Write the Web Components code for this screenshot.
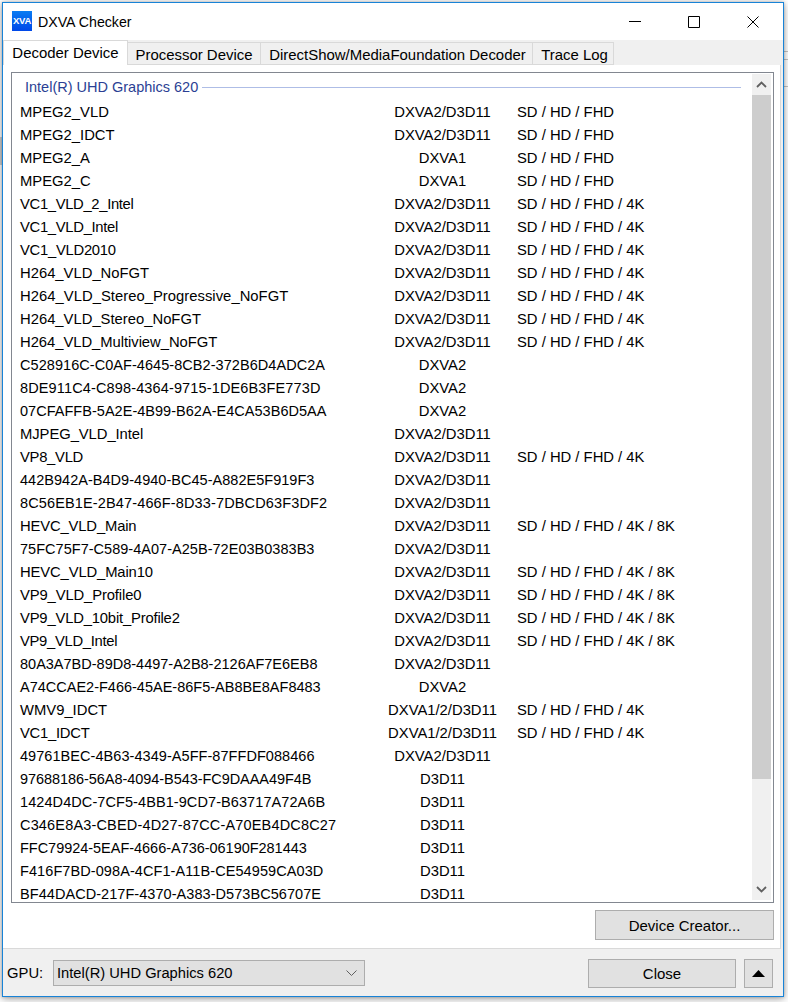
<!DOCTYPE html>
<html><head><meta charset="utf-8"><title>DXVA Checker</title>
<style>
html,body{margin:0;padding:0;background:#fff;height:100%;overflow:hidden}
body{padding:2px 0 0 2px;box-sizing:border-box;font:14.8px "Liberation Sans",Arial,sans-serif;color:#000;
background:
 linear-gradient(#c4c4c4,#c4c4c4) right 0 top 51px/4px 1px no-repeat,
 linear-gradient(#c4c4c4,#c4c4c4) right 0 top 59px/4px 1px no-repeat,
 linear-gradient(#c4c4c4,#c4c4c4) right 0 top 86px/4px 1px no-repeat,
 linear-gradient(#cfcfcf,#cfcfcf) left 0 top 137px/2px 28px no-repeat,
 #fff}
</style></head><body>
<dx-window>
  <dx-titlebar slot="title">DXVA Checker</dx-titlebar>
  <dx-tabs slot="tabs"><dx-tab active w="125">Decoder Device</dx-tab><dx-tab w="133">Processor Device</dx-tab><dx-tab w="272" style="padding-left:2px">DirectShow/MediaFoundation Decoder</dx-tab><dx-tab w="81" style="padding-left:3px">Trace Log</dx-tab></dx-tabs>
  <dx-page slot="page">
    <dx-list heading="Intel(R) UHD Graphics 620"></dx-list>
    <dx-button slot="action" w="179" h="30">Device Creator...</dx-button>
  </dx-page>
  <dx-footer slot="footer">
    <span slot="label">GPU:</span>
    <dx-combo slot="combo">Intel(R) UHD Graphics 620</dx-combo>
    <dx-button slot="close" w="148" h="29">Close</dx-button>
    <dx-button slot="more" w="29" h="29"><svg width="13" height="7" viewBox="0 0 13 7"><path d="M6.5 0 13 7H0z" fill="#000"/></svg></dx-button>
  </dx-footer>
</dx-window>
<script>
function def(name,html,init){customElements.define(name,class extends HTMLElement{constructor(){super();this.attachShadow({mode:'open'}).innerHTML=html}connectedCallback(){init&&init(this)}})}
def('dx-window',`<style>:host{display:flex;flex-direction:column;box-sizing:border-box;width:782px;height:995px;background:#f0f0f0;border:1px solid #1883d7;box-shadow:0 2px 8px rgba(0,0,0,.35),0 0 3px rgba(0,0,0,.2)}</style><slot name="title"></slot><slot name="tabs"></slot><slot name="page"></slot><slot name="footer"></slot>`);
def('dx-titlebar',`<style>:host{display:flex;align-items:center;height:37px;flex:none;background:#fff;padding-left:9px;font-size:14.2px;position:relative}
.logo{width:20px;height:20px;margin-right:6px;margin-top:-1px;background:linear-gradient(#0a7cf2,#0048e8);color:#fff;font:bold 9.5px/20px "Liberation Sans",sans-serif;text-align:center;letter-spacing:-.2px}
.t{margin-top:1px}.c{margin-left:auto;display:flex;margin-right:1px}
.c div{width:59px;height:37px;display:flex;align-items:center;justify-content:center}svg{display:block}</style>
<div class="logo">XVA</div><span class="t"><slot></slot></span>
<div class="c"><div><svg width="12" height="12" viewBox="0 0 12 12"><path d="M0 5.5h12" stroke="#000"/></svg></div><div><svg width="12" height="12" viewBox="0 0 12 12"><path d="M.5.5h11v11H.5z" fill="none" stroke="#000"/></svg></div><div><svg width="12" height="12" viewBox="0 0 12 12"><path d="M.5.5l11 11M11.500.5l-11 11" fill="none" stroke="#000" stroke-width="1"/></svg></div></div>`);
def('dx-tabs',`<style>:host{display:flex;align-items:flex-end;height:25px;flex:none;background:#f0f0f0;position:relative;z-index:1;margin-bottom:-1px}</style><slot></slot>`);
def('dx-tab',`<style>:host{display:flex;align-items:center;justify-content:center;box-sizing:border-box;height:23px;border:1px solid #d9d9d9;border-left:0;background:#f0f0f0;font-size:14.95px;padding-top:1px}
:host([active]){height:25px;background:#fff;border-bottom:0;border-left:1px solid #d9d9d9;padding:0 0 1px}</style><slot></slot>`,e=>{e.style.width=e.getAttribute('w')+'px'});
def('dx-page',`<style>:host{flex:none;display:flex;flex-direction:column;box-sizing:border-box;height:885px;background:#fff;border:1px solid #d9d9d9;border-left:0;margin-right:2px;padding:7px 6px 0 8px}
.a{display:flex;justify-content:flex-end;margin-top:7px}</style><slot></slot><div class="a"><slot name="action"></slot></div>`);
/* name | api | resolutions | width correction in px, spread over the name */
const R=`MPEG2_VLD|DXVA2/D3D11|f
MPEG2_IDCT|DXVA2/D3D11|f
MPEG2_A|DXVA1|f
MPEG2_C|DXVA1|f
VC1_VLD_2_Intel|DXVA2/D3D11|k|-5
VC1_VLD_Intel|DXVA2/D3D11|k|-4
VC1_VLD2010|DXVA2/D3D11|k|-3
H264_VLD_NoFGT|DXVA2/D3D11|k
H264_VLD_Stereo_Progressive_NoFGT|DXVA2/D3D11|k|1
H264_VLD_Stereo_NoFGT|DXVA2/D3D11|k
H264_VLD_Multiview_NoFGT|DXVA2/D3D11|k|-1
C528916C-C0AF-4645-8CB2-372B6D4ADC2A|DXVA2||2
8DE911C4-C898-4364-9715-1DE6B3FE773D|DXVA2||5
07CFAFFB-5A2E-4B99-B62A-E4CA53B6D5AA|DXVA2||1
MJPEG_VLD_Intel|DXVA2/D3D11||-1
VP8_VLD|DXVA2/D3D11|k|-2
442B942A-B4D9-4940-BC45-A882E5F919F3|DXVA2/D3D11||1
8C56EB1E-2B47-466F-8D33-7DBCD63F3DF2|DXVA2/D3D11||5
HEVC_VLD_Main|DXVA2/D3D11|e|-2
75FC75F7-C589-4A07-A25B-72E03B0383B3|DXVA2/D3D11||1
HEVC_VLD_Main10|DXVA2/D3D11|e|-2
VP9_VLD_Profile0|DXVA2/D3D11|e|-2
VP9_VLD_10bit_Profile2|DXVA2/D3D11|e|-4
VP9_VLD_Intel|DXVA2/D3D11|e|-4
80A3A7BD-89D8-4497-A2B8-2126AF7E6EB8|DXVA2/D3D11||0
A74CCAE2-F466-45AE-86F5-AB8BE8AF8483|DXVA2||0
WMV9_IDCT|DXVA1/2/D3D11|k
VC1_IDCT|DXVA1/2/D3D11|k|-2
49761BEC-4B63-4349-A5FF-87FFDF088466|DXVA2/D3D11||2
97688186-56A8-4094-B543-FC9DAAA49F4B|D3D11||-2
1424D4DC-7CF5-4BB1-9CD7-B63717A72A6B|D3D11||3
C346E8A3-CBED-4D27-87CC-A70EB4DC8C27|D3D11||6
FFC79924-5EAF-4666-A736-06190F281443|D3D11||-1
F416F7BD-098A-4CF1-A11B-CE54959CA03D|D3D11||3
BF44DACD-217F-4370-A383-D573BC56707E|D3D11||2`.split('\n');
const RES={f:'SD / HD / FHD',k:'SD / HD / FHD / 4K',e:'SD / HD / FHD / 4K / 8K','':''};
def('dx-list',`<style>:host{display:flex;box-sizing:border-box;flex:none;height:831px;border:1px solid #828790;background:#fff;color:#000}
.m{flex:1;min-width:0;overflow:hidden;padding-top:4px}
.h{display:flex;align-items:center;height:20px;padding:0 8px 0 13px;margin-bottom:3px;color:#2b3f94;font-size:14.5px;gap:4px;margin-top:0}
.h i{flex:1;height:1px;background:#aebde6}
.b{flex:none;width:19px;margin:1px 2px 2px 3px;display:flex;flex-direction:column;background:#f0f0f0}
.u,.d{height:21px;display:flex;align-items:center;justify-content:center;flex:none}
.tr{flex:1;min-height:0}.th{height:684px;background:#cdcdcd}
svg{display:block}</style>
<div class="m"><div class="h"><span id="t"></span><i></i></div><div id="r"></div></div>
<div class="b"><div class="u"><svg width="11" height="7" viewBox="0 0 11 7"><path d="M1 6l4.500-4.500L10 6" fill="none" stroke="#606060" stroke-width="1.800"/></svg></div><div class="tr"><div class="th"></div></div><div class="d"><svg width="11" height="7" viewBox="0 0 11 7"><path d="M1 1l4.500 4.500L10 1" fill="none" stroke="#606060" stroke-width="1.800"/></svg></div></div>`,e=>{
 const s=e.shadowRoot;s.getElementById('t').textContent=e.getAttribute('heading');
 const r=s.getElementById('r');if(r.children.length)return;
 R.forEach(l=>{const[a,b,c,d]=l.split('|');const x=document.createElement('dx-row');
  const fs=a.length===36?'font-size:14.5px;':'';
  const st=` style="${fs}letter-spacing:${((+d||0)/a.length).toFixed(3)}px"`;
  x.innerHTML=`<span slot="name"${st}>${a}</span><span slot="api">${b}</span><span slot="res">${RES[c]}</span>`;r.appendChild(x)})});
def('dx-row',`<style>:host{display:grid;grid-template-columns:348px 149px 1fr;height:23px;align-items:center;padding-left:8px;font-size:14.8px;white-space:nowrap}
.b{text-align:center}</style><div><slot name="name"></slot></div><div class="b"><slot name="api"></slot></div><div><slot name="res"></slot></div>`);
def('dx-button',`<style>:host{display:flex;align-items:center;justify-content:center;box-sizing:border-box;background:#e1e1e1;border:1px solid #adadad;font-size:15px;flex:none;padding-top:1px}</style><slot></slot>`,e=>{e.style.width=e.getAttribute('w')+'px';e.style.height=e.getAttribute('h')+'px'});
def('dx-footer',`<style>:host{flex:1;display:flex;align-items:center;background:#f0f0f0;padding:1px 10px 0 4px;font-size:14.8px}
.l{width:46px;flex:none}.s{flex:1}.g{width:8px}</style><div class="l"><slot name="label"></slot></div><slot name="combo"></slot><div class="s"></div><slot name="close"></slot><div class="g"></div><slot name="more"></slot>`);
def('dx-combo',`<style>:host{display:flex;align-items:center;box-sizing:border-box;width:312px;height:26px;background:#e1e1e1;border:1px solid #adadad;padding-left:3px;font-size:14.7px;flex:none}
svg{margin-left:auto;margin-right:7px;display:block}</style><slot></slot><svg width="11" height="6" viewBox="0 0 11 6"><path d="M.5.5l5 5 5-5" fill="none" stroke="#606060"/></svg>`);
</script>
</body></html>
